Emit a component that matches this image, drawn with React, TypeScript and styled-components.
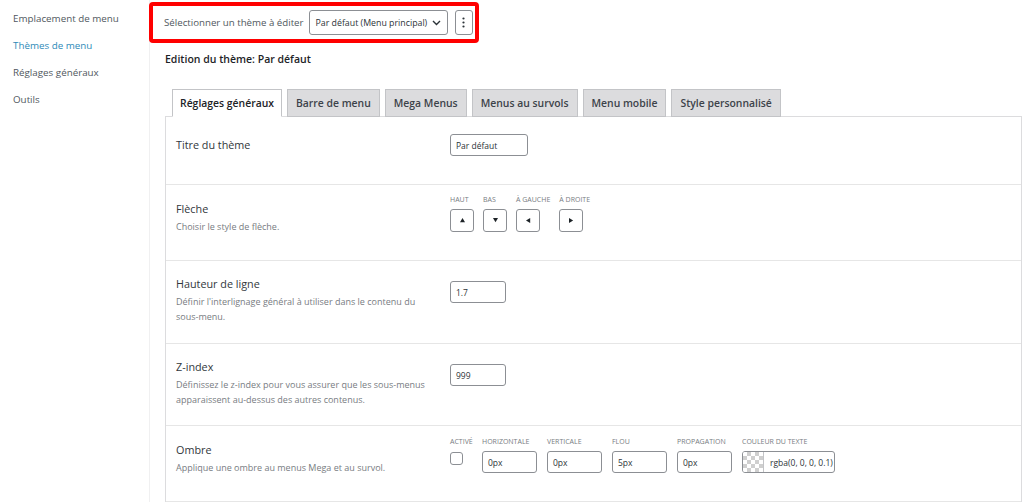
import React from "react";
import styled, { createGlobalStyle } from "styled-components";

const GlobalStyle = createGlobalStyle`
  html, body {
    margin: 0;
    padding: 0;
    background: #ffffff;
    font-family: "Open Sans", "Noto Sans", sans-serif;
    color: #3c434a;
  }
  * { box-sizing: border-box; }
`;

const Page = styled.div`
  display: flex;
  width: 1024px;
  height: 502px;
  overflow: hidden;
  background: #ffffff;
`;

const Sidebar = styled.nav`
  width: 150px;
  flex: none;
  border-right: 1px solid #f0f0f1;
  padding-top: 10px;
  display: flex;
  flex-direction: column;
`;

const SideLink = styled.a<{ $active?: boolean }>`
  display: block;
  flex: none;
  padding: 0 13px;
  height: 27px;
  line-height: 17px;
  font-size: 9.8px;
  color: ${(p) => (p.$active ? "#2e8ab8" : "#50575e")};
  text-decoration: none;
`;

const Main = styled.main`
  flex: 1;
  display: flex;
  flex-direction: column;
  padding-top: 2px;
  min-width: 0;
`;

const Toolbar = styled.div`
  flex: none;
  align-self: flex-start;
  display: flex;
  align-items: center;
  height: 41px;
  border: 4px solid #ff0000;
  border-radius: 4px;
  padding: 0 2px 0 11px;
  margin-left: -1px;
`;

const ToolbarLabel = styled.span`
  font-size: 9.7px;
  color: #50575e;
  margin-right: 5px;
  white-space: nowrap;
`;

const SelectBox = styled.div`
  width: 139px;
  height: 25px;
  border: 1px solid #8c8f94;
  border-radius: 3px;
  display: flex;
  align-items: center;
  justify-content: space-between;
  padding: 0 6px 0 6px;
  font-size: 8.8px;
  color: #2c3338;
  white-space: nowrap;
`;

const KebabButton = styled.div`
  width: 18px;
  height: 25px;
  margin-left: 7px;
  border: 1px solid #8c8f94;
  border-radius: 3px;
  display: flex;
  align-items: center;
  justify-content: center;
`;

const Content = styled.div`
  flex: none;
  padding: 0 2px 0 15px;
  display: flex;
  flex-direction: column;
`;

const EditTitle = styled.h2`
  margin: 5px 0 0;
  height: 22px;
  line-height: 22px;
  font-size: 10.5px;
  font-weight: 600;
  color: #1d2327;
`;

const TabList = styled.div`
  display: flex;
  gap: 5px;
  margin: 19px 0 0 7px;
  position: relative;
  z-index: 1;
`;

const Tab = styled.div<{ $active?: boolean }>`
  height: 28px;
  padding: 0 ${(p) => (p.$active ? "7px" : "8px")};
  display: flex;
  align-items: center;
  font-size: 10.4px;
  font-weight: 600;
  white-space: nowrap;
  color: ${(p) => (p.$active ? "#1d2327" : "#3c434a")};
  background: ${(p) => (p.$active ? "#ffffff" : "#dcdcde")};
  border: 1px solid #c3c4c7;
  border-bottom: 1px solid ${(p) => (p.$active ? "#ffffff" : "#c3c4c7")};
  margin-bottom: -1px;
`;

const Panel = styled.section`
  border: 1px solid #dcdcde;
  border-bottom: none;
  background: #ffffff;
`;

const Row = styled.div<{ $padTop: number; $ctrlTop: number; $padBottom?: number; $ctrlBottom?: number }>`
  display: grid;
  grid-template-columns: 284px 1fr;
  border-bottom: 1px solid #e6e6e6;

  & > div:first-child {
    padding: ${(p) => p.$padTop}px 10px ${(p) => p.$padBottom ?? 16}px;
  }
  & > div:last-child {
    padding: ${(p) => p.$ctrlTop}px 0 ${(p) => p.$ctrlBottom ?? 28}px;
  }
`;

const LabelCell = styled.div``;

const ControlCell = styled.div`
  display: flex;
  align-items: flex-start;
`;

const RowTitle = styled.div`
  font-size: 10.8px;
  line-height: 15px;
  color: #32373c;
`;

const RowDesc = styled.div`
  margin-top: 3px;
  font-size: 9px;
  line-height: 15px;
  color: #787c82;
  max-width: 252px;
`;

const TextInput = styled.div<{ $w: number }>`
  width: ${(p) => p.$w}px;
  height: 22px;
  border: 1px solid #8c8f94;
  border-radius: 3px;
  padding: 0 5px;
  display: flex;
  align-items: center;
  font-size: 8.5px;
  color: #2c3338;
`;

const FieldGroup = styled.div<{ $gap: number }>`
  display: flex;
  gap: ${(p) => p.$gap}px;
`;

const Field = styled.div<{ $w?: number }>`
  display: flex;
  flex-direction: column;
  gap: 4px;
  ${(p) => (p.$w ? `width: ${p.$w}px;` : "")}
`;

const SmallLabel = styled.span`
  font-size: 7px;
  line-height: 11px;
  text-transform: uppercase;
  color: #787c82;
  white-space: nowrap;
`;

const ArrowButton = styled.div`
  width: 24px;
  height: 23px;
  border: 1px solid #8c8f94;
  border-radius: 3px;
  display: flex;
  align-items: center;
  justify-content: center;
`;

const Checkbox = styled.div`
  width: 13px;
  height: 13px;
  margin-top: 1px;
  border: 1px solid #8c8f94;
  border-radius: 3px;
`;

const ColorField = styled.div`
  width: 93px;
  height: 22px;
  border: 1px solid #8c8f94;
  border-radius: 3px;
  display: flex;
  align-items: center;
  overflow: hidden;
  font-size: 8.5px;
  color: #2c3338;
  white-space: nowrap;
`;

const Swatch = styled.div`
  width: 21px;
  height: 100%;
  margin-right: 6px;
  border-right: 1px solid #c3c4c7;
  background-color: #ffffff;
  background-image: linear-gradient(45deg, #cfcfcf 25%, transparent 25%, transparent 75%, #cfcfcf 75%),
    linear-gradient(45deg, #cfcfcf 25%, transparent 25%, transparent 75%, #cfcfcf 75%);
  background-size: 8px 8px;
  background-position: 0 0, 4px 4px;
`;

const Triangle = ({ dir }: { dir: "up" | "down" | "left" | "right" }) => {
  const pts = {
    up: "0,5 3,0 6,5",
    down: "0,0 6,0 3,5",
    left: "5,0 5,6 0,3",
    right: "0,0 5,3 0,6",
  }[dir];
  return (
    <svg width="5" height="5" viewBox="0 0 6 6">
      <polygon points={pts} fill="#1d2327" />
    </svg>
  );
};

const arrows: { label: string; dir: "up" | "down" | "left" | "right" }[] = [
  { label: "Haut", dir: "up" },
  { label: "Bas", dir: "down" },
  { label: "À gauche", dir: "left" },
  { label: "À droite", dir: "right" },
];

const shadowFields = [
  { label: "Horizontale", value: "0px" },
  { label: "Verticale", value: "0px" },
  { label: "Flou", value: "5px" },
  { label: "Propagation", value: "0px" },
];

export default function App() {
  return (
    <>
      <GlobalStyle />
      <Page>
        <Sidebar>
          <SideLink>Emplacement de menu</SideLink>
          <SideLink $active>Thèmes de menu</SideLink>
          <SideLink>Réglages généraux</SideLink>
          <SideLink>Outils</SideLink>
        </Sidebar>

        <Main>
          <Toolbar>
            <ToolbarLabel>Sélectionner un thème à éditer</ToolbarLabel>
            <SelectBox>
              <span>Par défaut (Menu principal)</span>
              <svg width="9" height="6" viewBox="0 0 9 6">
                <path d="M1 1l3.5 3.5L8 1" fill="none" stroke="#2c3338" strokeWidth="1.4" />
              </svg>
            </SelectBox>
            <KebabButton>
              <svg width="3" height="11" viewBox="0 0 3 11">
                <circle cx="1.5" cy="1.5" r="1.1" fill="#2c3338" />
                <circle cx="1.5" cy="5.5" r="1.1" fill="#2c3338" />
                <circle cx="1.5" cy="9.5" r="1.1" fill="#2c3338" />
              </svg>
            </KebabButton>
          </Toolbar>

          <Content>
            <EditTitle>Edition du thème: Par défaut</EditTitle>

            <TabList>
              <Tab $active>Réglages généraux</Tab>
              <Tab>Barre de menu</Tab>
              <Tab>Mega Menus</Tab>
              <Tab>Menus au survols</Tab>
              <Tab>Menu mobile</Tab>
              <Tab>Style personnalisé</Tab>
            </TabList>

            <Panel>
              <Row $padTop={20} $ctrlTop={17}>
                <LabelCell>
                  <RowTitle>Titre du thème</RowTitle>
                </LabelCell>
                <ControlCell>
                  <TextInput $w={78}>Par défaut</TextInput>
                </ControlCell>
              </Row>

              <Row $padTop={16} $ctrlTop={9} $ctrlBottom={28}>
                <LabelCell>
                  <RowTitle>Flèche</RowTitle>
                  <RowDesc>Choisir le style de flèche.</RowDesc>
                </LabelCell>
                <ControlCell>
                  <FieldGroup $gap={9}>
                    {arrows.map((a) => (
                      <Field key={a.label}>
                        <SmallLabel>{a.label}</SmallLabel>
                        <ArrowButton>
                          <Triangle dir={a.dir} />
                        </ArrowButton>
                      </Field>
                    ))}
                  </FieldGroup>
                </ControlCell>
              </Row>

              <Row $padTop={15} $ctrlTop={20} $padBottom={19}>
                <LabelCell>
                  <RowTitle>Hauteur de ligne</RowTitle>
                  <RowDesc>Définir l'interlignage général à utiliser dans le contenu du sous-menu.</RowDesc>
                </LabelCell>
                <ControlCell>
                  <TextInput $w={56}>1.7</TextInput>
                </ControlCell>
              </Row>

              <Row $padTop={15} $ctrlTop={20} $padBottom={18}>
                <LabelCell>
                  <RowTitle>Z-index</RowTitle>
                  <RowDesc>Définissez le z-index pour vous assurer que les sous-menus apparaissent au-dessus des autres contenus.</RowDesc>
                </LabelCell>
                <ControlCell>
                  <TextInput $w={56}>999</TextInput>
                </ControlCell>
              </Row>

              <Row $padTop={16} $ctrlTop={10}>
                <LabelCell>
                  <RowTitle>Ombre</RowTitle>
                  <RowDesc>Applique une ombre au menus Mega et au survol.</RowDesc>
                </LabelCell>
                <ControlCell>
                  <FieldGroup $gap={10}>
                    <Field $w={22}>
                      <SmallLabel>Activé</SmallLabel>
                      <Checkbox />
                    </Field>
                    {shadowFields.map((f) => (
                      <Field key={f.label}>
                        <SmallLabel>{f.label}</SmallLabel>
                        <TextInput $w={55}>{f.value}</TextInput>
                      </Field>
                    ))}
                    <Field>
                      <SmallLabel>Couleur du texte</SmallLabel>
                      <ColorField>
                        <Swatch />
                        rgba(0, 0, 0, 0.1)
                      </ColorField>
                    </Field>
                  </FieldGroup>
                </ControlCell>
              </Row>
            </Panel>
          </Content>
        </Main>
      </Page>
    </>
  );
}
